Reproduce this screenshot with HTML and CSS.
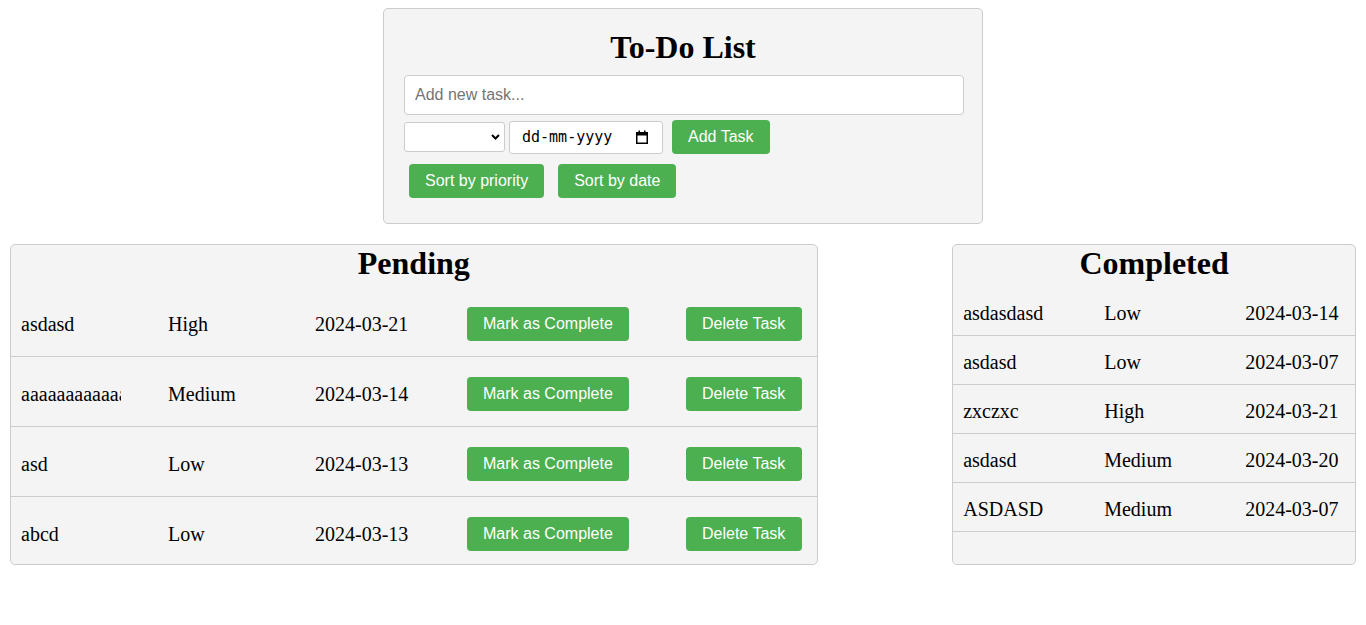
FILE: index.html
```html
<!DOCTYPE html>
<html lang="en">
<head>
<meta charset="utf-8">
<title>To-Do List</title>
<link rel="stylesheet" href="styles.css">
</head>
<body>
<div class="app">
  <h1 class="title">To-Do List</h1>
  <input class="task-input" type="text" placeholder="Add new task...">
  <div class="controls">
    <div class="select-wrap">
      <select class="priority"><option value=""></option><option>Low</option><option>Medium</option><option>High</option></select>
      <svg class="chev" width="9" height="6" viewBox="0 0 9 6"><path d="M1 1l3.5 3.5L8 1" fill="none" stroke="#000" stroke-width="2"/></svg>
    </div>
    <div class="date-field">
      <span class="date-text">dd-mm-yyyy</span>
      <svg class="cal" width="14" height="14" viewBox="0 0 14 14"><rect x="1.75" y="2.75" width="10.5" height="10.5" fill="none" stroke="#000" stroke-width="1.5"/><rect x="1" y="2" width="12" height="3.5" fill="#000"/><rect x="3.5" y="0.5" width="1.5" height="2.5" fill="#000"/><rect x="9" y="0.5" width="1.5" height="2.5" fill="#000"/></svg>
    </div>
    <button class="btn add">Add Task</button>
  </div>
  <div class="sorts">
    <button class="btn sort">Sort by priority</button>
    <button class="btn sort">Sort by date</button>
  </div>
</div>

<div class="lists">
  <section class="panel pending">
    <h2 class="panel-title">Pending</h2>
    <div class="prow"><div class="cell name">asdasd</div><div class="cell">High</div><div class="cell">2024-03-21</div><div><button class="btn row-btn">Mark as Complete</button></div><div><button class="btn row-btn del">Delete Task</button></div></div>
    <div class="prow"><div class="cell name">aaaaaaaaaaaaaaaa</div><div class="cell">Medium</div><div class="cell">2024-03-14</div><div><button class="btn row-btn">Mark as Complete</button></div><div><button class="btn row-btn del">Delete Task</button></div></div>
    <div class="prow"><div class="cell name">asd</div><div class="cell">Low</div><div class="cell">2024-03-13</div><div><button class="btn row-btn">Mark as Complete</button></div><div><button class="btn row-btn del">Delete Task</button></div></div>
    <div class="prow"><div class="cell name">abcd</div><div class="cell">Low</div><div class="cell">2024-03-13</div><div><button class="btn row-btn">Mark as Complete</button></div><div><button class="btn row-btn del">Delete Task</button></div></div>
  </section>
  <section class="panel completed">
    <h2 class="panel-title">Completed</h2>
    <div class="crow"><div>asdasdasd</div><div>Low</div><div>2024-03-14</div></div>
    <div class="crow"><div>asdasd</div><div>Low</div><div>2024-03-07</div></div>
    <div class="crow"><div>zxczxc</div><div>High</div><div>2024-03-21</div></div>
    <div class="crow"><div>asdasd</div><div>Medium</div><div>2024-03-20</div></div>
    <div class="crow"><div>ASDASD</div><div>Medium</div><div>2024-03-07</div></div>
  </section>
</div>
</body>
</html>
```

FILE: styles.css
```css
body {
  margin: 8px;
  font-family: "Liberation Serif", "Times New Roman", serif;
  color: #000;
  background: #fff;
}

.app {
  width: 600px;
  box-sizing: border-box;
  margin: 0 auto;
  padding: 20px;
  background: #f4f4f4;
  border: 1px solid #ccc;
  border-radius: 5px;
}

.title {
  margin: 0 0 9px;
  font-size: 32px;
  line-height: 37px;
  font-weight: bold;
  text-align: center;
}

.task-input {
  display: block;
  box-sizing: border-box;
  width: 560px;
  height: 40px;
  margin: 0;
  padding: 10px;
  border: 1px solid #ccc;
  border-radius: 4px;
  background: #fff;
  font-family: "Liberation Sans", Arial, sans-serif;
  font-size: 16px;
  color: #000;
}

.task-input::placeholder {
  color: #757575;
}

.controls {
  display: flex;
  align-items: center;
  gap: 4px;
}

.select-wrap {
  position: relative;
  width: 101px;
  height: 30px;
}

.priority {
  appearance: none;
  -webkit-appearance: none;
  box-sizing: border-box;
  width: 101px;
  height: 30px;
  margin: 0;
  padding: 0 24px 0 6px;
  border: 1px solid #ccc;
  border-radius: 3px;
  background: #fff;
  font-family: "Liberation Sans", Arial, sans-serif;
  font-size: 14px;
}

.chev {
  position: absolute;
  left: 87px;
  top: 12px;
  pointer-events: none;
}

.date-field {
  display: flex;
  align-items: center;
  box-sizing: border-box;
  width: 154px;
  height: 33px;
  padding: 0 13px 0 12px;
  border: 1px solid #ccc;
  border-radius: 3px;
  background: #fff;
}

.date-text {
  font-family: "DejaVu Sans Mono", "Liberation Mono", monospace;
  font-size: 15px;
  color: #000;
}

.cal {
  margin-left: auto;
}

.btn {
  margin: 5px;
  padding: 8px 16px;
  border: none;
  border-radius: 4px;
  background: #4caf50;
  color: #fff;
  font-family: "Liberation Sans", Arial, sans-serif;
  font-size: 16px;
  line-height: 18px;
  cursor: pointer;
}

.sorts {
  display: flex;
  gap: 4px;
}

.lists {
  display: flex;
  justify-content: space-between;
  align-items: stretch;
  margin: 20px 2px 0;
}

.panel {
  box-sizing: border-box;
  background: #f4f4f4;
  border: 1px solid #ccc;
  border-radius: 5px;
}

.pending {
  width: 60%;
}

.completed {
  width: 30%;
}

.panel-title {
  margin: 0 0 5px;
  font-size: 32px;
  line-height: 37px;
  font-weight: bold;
  text-align: center;
}

.prow {
  display: grid;
  grid-template-columns: 147px 147px 152px 219px auto;
  align-items: start;
  padding: 20px 10px 15px;
  border-bottom: 1px solid #ccc;
  font-size: 20px;
  line-height: 23px;
}

.prow:last-child {
  padding-bottom: 13px;
  border-bottom: none;
}

.prow .btn {
  margin: 0;
}

.prow .del {
  padding: 8px 17px 8px 16px;
}

.cell {
  margin-top: 6px;
}

.cell.name {
  width: 100px;
  overflow: hidden;
  white-space: nowrap;
}

.crow {
  display: grid;
  grid-template-columns: 141px 141px auto;
  padding: 15px 10px 10px;
  border-bottom: 1px solid #ccc;
  font-size: 20px;
  line-height: 23px;
}
```
